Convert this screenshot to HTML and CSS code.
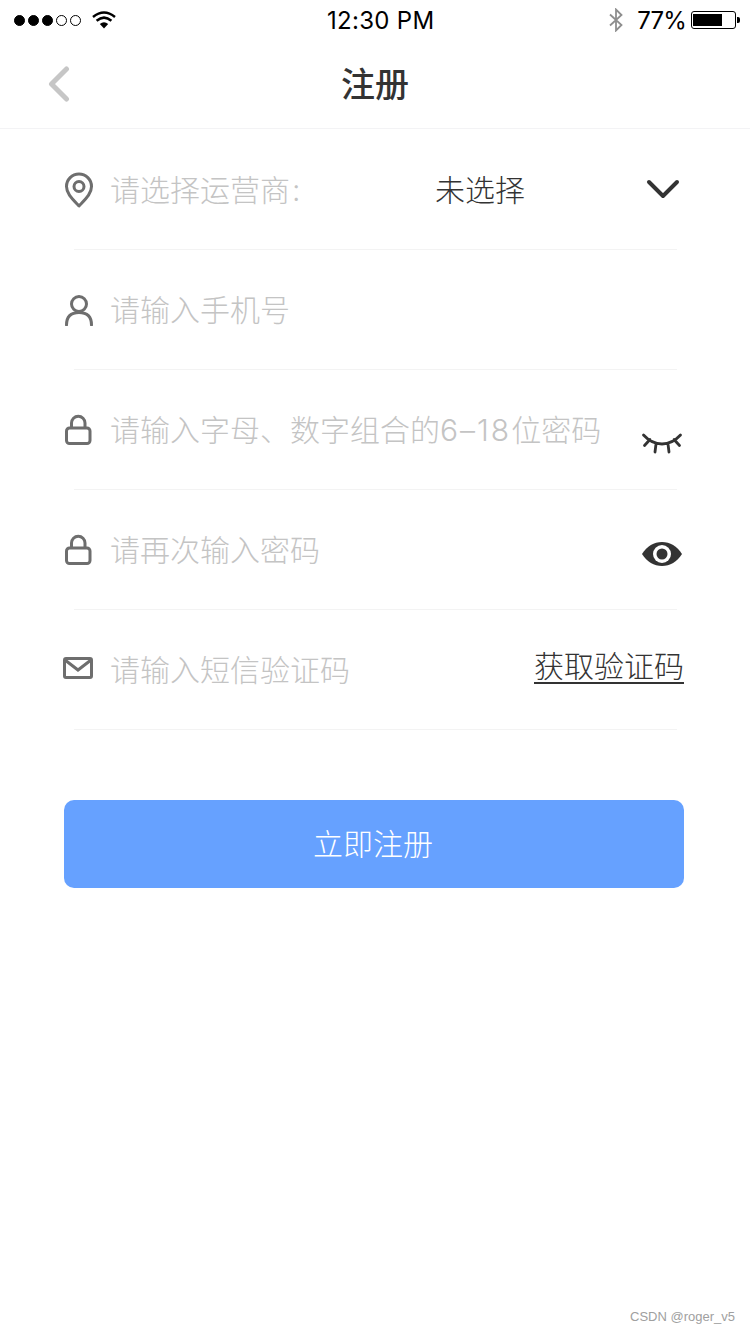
FILE: index.html
```html
<!DOCTYPE html>
<html lang="zh-CN">
<head>
    <meta charset="UTF-8">
    <meta name="viewport" content="width=device-width, initial-scale=1.0">
    <title>注册</title>
    <link rel="stylesheet" href="styles.css">
</head>
<body>
    <div class="status-bar">
        <div class="status-left">
            <span class="dot on"></span><span class="dot on"></span><span class="dot on"></span><span class="dot"></span><span class="dot"></span>
            <svg class="wifi" width="24" height="18" viewBox="0 0 24 18"><path d="M12 17.500 7.800 13Q12 9.500 16.200 13z" fill="#000"/><path d="M4.600 9.800Q12 3.400 19.400 9.800M1 6Q12-3 23 6" fill="none" stroke="#000" stroke-width="2.500"/></svg>
        </div>
        <div class="status-time">12:30 PM</div>
        <div class="status-right">
            <svg class="bt" width="16" height="24" viewBox="0 0 16 24"><path d="M2 6.500 13.500 17 8 22.500V1.500L13.500 7 2 17.500" fill="none" stroke="#8e8e8e" stroke-width="1.800"/></svg>
            <span class="batt-text">77%</span>
            <div class="battery"><div class="battery-level"></div></div>
            <div class="battery-tip"></div>
        </div>
    </div>

    <header class="nav">
        <svg class="back" width="22" height="36" viewBox="0 0 22 36"><path d="M18.500 3 3.500 18l15 15" fill="none" stroke="#c6c6c6" stroke-width="5" stroke-linecap="round" stroke-linejoin="round"/></svg>
        <h1>注册</h1>
    </header>

    <form class="reg-form">
        <div class="row">
            <svg class="icon" width="30" height="36" viewBox="0 0 30 36"><path d="M15 34C8 26.500 2.500 21.500 2.500 14.500a12.500 12.500 0 0 1 25 0C27.500 21.500 22 26.500 15 34z" fill="none" stroke="#6e6e6e" stroke-width="3" stroke-linejoin="round"/><circle cx="15" cy="14.500" r="5" fill="none" stroke="#6e6e6e" stroke-width="3"/></svg>
            <span class="hint label">请选择运营商<span class="colon">:</span></span>
            <span class="picked">未选择</span>
            <svg class="chevron" width="34" height="20" viewBox="0 0 34 20"><path d="M3 3l14 14L31 3" fill="none" stroke="#333" stroke-width="4" stroke-linecap="round" stroke-linejoin="round"/></svg>
        </div>
        <div class="row">
            <svg class="icon" width="30" height="32" viewBox="0 0 30 32"><circle cx="15" cy="10" r="7.500" fill="none" stroke="#6e6e6e" stroke-width="3"/><path d="M2.500 31c0-8 4-12.500 12.500-12.500S27.500 23 27.500 31" fill="none" stroke="#6e6e6e" stroke-width="3" stroke-linecap="round"/></svg>
            <span class="hint">请输入手机号</span>
        </div>
        <div class="row">
            <svg class="icon" width="30" height="32" viewBox="0 0 30 32"><rect x="2.500" y="14" width="23.500" height="15.500" rx="3" fill="none" stroke="#6e6e6e" stroke-width="3"/><path d="M7.500 14V9a6.750 6.750 0 0 1 13.500 0v5" fill="none" stroke="#6e6e6e" stroke-width="3"/></svg>
            <span class="hint">请输入字母、数字组合的<span class="digits">6–18</span>位密码</span>
            <svg class="eye eye-closed" width="42" height="24" viewBox="0 0 42 24"><path d="M2.500 2C8 8 13 11 21 11S34 8 39.500 2M9 6.500 3.500 12.500M33 6.500l5.500 6M15 11l-1 8M27 11l1 8" fill="none" stroke="#333" stroke-width="2.800" stroke-linecap="round"/></svg>
        </div>
        <div class="row">
            <svg class="icon" width="30" height="32" viewBox="0 0 30 32"><rect x="2.500" y="14" width="23.500" height="15.500" rx="3" fill="none" stroke="#6e6e6e" stroke-width="3"/><path d="M7.500 14V9a6.750 6.750 0 0 1 13.500 0v5" fill="none" stroke="#6e6e6e" stroke-width="3"/></svg>
            <span class="hint">请再次输入密码</span>
            <svg class="eye eye-open" width="42" height="26" viewBox="0 0 42 26"><path d="M1 13C6 5 13 1 21 1s15 4 20 12c-5 8-12 12-20 12S6 21 1 13z" fill="#333"/><circle cx="21" cy="13" r="9" fill="#fff"/><circle cx="21" cy="13" r="5.500" fill="#333"/></svg>
        </div>
        <div class="row">
            <svg class="icon icon-mail" width="30" height="22" viewBox="0 0 30 22"><rect x="1.500" y="1.500" width="27" height="19" rx="1.500" fill="none" stroke="#6e6e6e" stroke-width="3"/><path d="M2 3l13 10L28 3" fill="none" stroke="#6e6e6e" stroke-width="3"/></svg>
            <span class="hint">请输入短信验证码</span>
            <a class="get-code">获取验证码</a>
        </div>
        <button type="button" class="submit">立即注册</button>
    </form>

    <div class="watermark">CSDN @roger_v5</div>
</body>
</html>
```

FILE: styles.css
```css
body {
    font-family: "Noto Sans CJK SC", "Liberation Sans", sans-serif;
    margin: 0;
    padding: 0;
    background-color: #fff;
    width: 750px;
    height: 1334px;
    position: relative;
    overflow: hidden;
}

.status-bar {
    height: 40px;
    display: flex;
    align-items: center;
    justify-content: space-between;
    padding: 0 10px 0 14px;
    position: relative;
    font-family: Inter, "Liberation Sans", sans-serif;
    color: #000;
}

.status-left {
    display: flex;
    align-items: center;
}

.dot {
    box-sizing: border-box;
    width: 11px;
    height: 11px;
    border: 1px solid #000;
    border-radius: 50%;
    margin-right: 3px;
}

.dot.on {
    background-color: #000;
}

.wifi {
    margin-left: 8px;
}

.status-time {
    position: absolute;
    left: 327px;
    top: 6px;
    font-size: 24px;
    line-height: 30px;
    letter-spacing: 0.3px;
}

.status-right {
    display: flex;
    align-items: center;
}

.batt-text {
    font-size: 24px;
    margin-left: 13px;
    margin-right: 5px;
    letter-spacing: -0.8px;
}

.battery {
    box-sizing: border-box;
    width: 45px;
    height: 18px;
    border: 1px solid #000;
    border-radius: 3px;
    padding: 2px 1px;
}

.battery-level {
    width: 29px;
    height: 100%;
    background-color: #000;
}

.battery-tip {
    width: 3px;
    height: 6px;
    margin-left: 1px;
    background-color: #000;
    border-radius: 0 2px 2px 0;
}

.nav {
    height: 88px;
    border-bottom: 1px solid #f3f3f5;
    display: flex;
    align-items: center;
    justify-content: center;
    position: relative;
}

.nav h1 {
    margin: -4px 0 0 0;
    font-size: 34px;
    font-weight: 500;
    color: #333;
}

.back {
    position: absolute;
    left: 48px;
    top: 26px;
}

.reg-form {
    padding: 1px 66px 0 64px;
}

.row {
    height: 120px;
    box-sizing: border-box;
    display: flex;
    align-items: center;
    border-bottom: 1px solid #f3f3f3;
    margin-left: 10px;
    margin-right: 7px;
    position: relative;
    padding-bottom: 4px;
}

.icon {
    margin-left: -10px;
    margin-top: 4px;
    flex: none;
    width: 30px;
}

.icon-mail {
    margin-left: -11px;
    margin-top: 0;
    margin-right: 1px;
}

.hint {
    margin-left: 16px;
    font-family: Inter, "Noto Sans CJK SC", sans-serif;
    font-size: 30px;
    font-weight: 300;
    color: #c4c4c4;
    white-space: nowrap;
}

.colon {
    margin-left: 2px;
}

.digits {
    letter-spacing: 2px;
}

.label {
    width: 325px;
}

.picked {
    font-size: 30px;
    font-weight: 300;
    color: #333;
}

.chevron {
    position: absolute;
    right: -3px;
    top: 49px;
}

.eye {
    position: absolute;
    right: -6px;
}

.eye-closed {
    top: 63px;
}

.eye-open {
    top: 51px;
}

.get-code {
    position: absolute;
    right: -7px;
    top: 32px;
    font-size: 30px;
    font-weight: 300;
    color: #333;
    text-decoration: underline;
    text-decoration-thickness: 2px;
    text-underline-offset: 5px;
}

.submit {
    display: block;
    width: 620px;
    height: 88px;
    margin-top: 70px;
    background-color: #66a1ff;
    color: #fff;
    border: none;
    border-radius: 10px;
    font-family: inherit;
    font-size: 30px;
    font-weight: 300;
    padding: 0 2px 4px 0;
}

.watermark {
    position: absolute;
    right: 15px;
    bottom: 10px;
    font-family: "Liberation Sans", sans-serif;
    font-size: 13px;
    color: #a0a0a0;
}
```
